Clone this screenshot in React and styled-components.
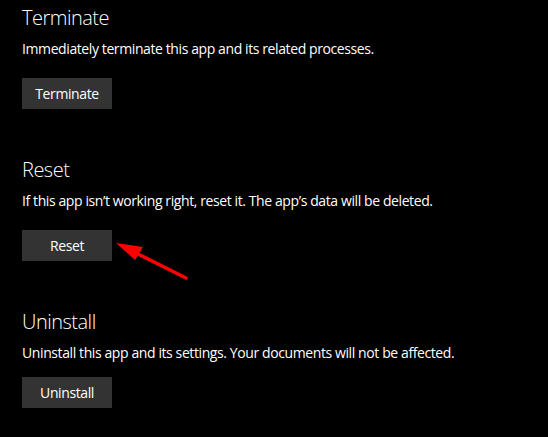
import React from "react";
import styled, { createGlobalStyle } from "styled-components";

const Global = createGlobalStyle`
  html, body { margin: 0; padding: 0; background: #000; }
  body { font-family: "Open Sans", "Noto Sans", sans-serif; color: #fff; }
`;

const Page = styled.div`
  position: relative;
  width: 548px;
  height: 437px;
  box-sizing: border-box;
  padding: 4px 0 0 22px;
  background: #000;
  overflow: hidden;
`;

const Section = styled.section`
  display: flex;
  flex-direction: column;
  align-items: flex-start;
  margin-bottom: 47px;
`;

const Title = styled.h2`
  margin: 0 0 7px;
  font-size: 20px;
  line-height: 28px;
  font-weight: 300;
  letter-spacing: -0.5px;
  color: #fff;
`;

const Desc = styled.p`
  margin: 0 0 ${(p) => p.$gap}px;
  font-size: 14px;
  line-height: 20px;
  letter-spacing: -0.4px;
  color: #fff;
`;

const Button = styled.button`
  width: 90px;
  height: 31px;
  border: none;
  background: #333333;
  color: #fff;
  font-family: inherit;
  font-size: 14px;
  letter-spacing: -0.4px;
  padding: 0;
  cursor: pointer;
`;

const Arrow = styled.svg`
  position: absolute;
  left: 0;
  top: 0;
  pointer-events: none;
`;

const sections = [
  { title: "Terminate", desc: "Immediately terminate this app and its related processes.", btn: "Terminate", gap: 19 },
  { title: "Reset", desc: "If this app isn\u2019t working right, reset it. The app\u2019s data will be deleted.", btn: "Reset", gap: 19 },
  { title: "Uninstall", desc: "Uninstall this app and its settings. Your documents will not be affected.", btn: "Uninstall", gap: 14 },
];

export default function App() {
  return (
    <>
      <Global />
      <Page>
        {sections.map((s) => (
          <Section key={s.title}>
            <Title>{s.title}</Title>
            <Desc $gap={s.gap}>{s.desc}</Desc>
            <Button>{s.btn}</Button>
          </Section>
        ))}
        <Arrow width="548" height="437" viewBox="0 0 548 437">
          <line x1="186" y1="278" x2="132" y2="251" stroke="#ff0000" strokeWidth="3.5" strokeLinecap="round" />
          <polygon points="116,243 143,247 135,260" fill="#ff0000" />
        </Arrow>
      </Page>
    </>
  );
}
